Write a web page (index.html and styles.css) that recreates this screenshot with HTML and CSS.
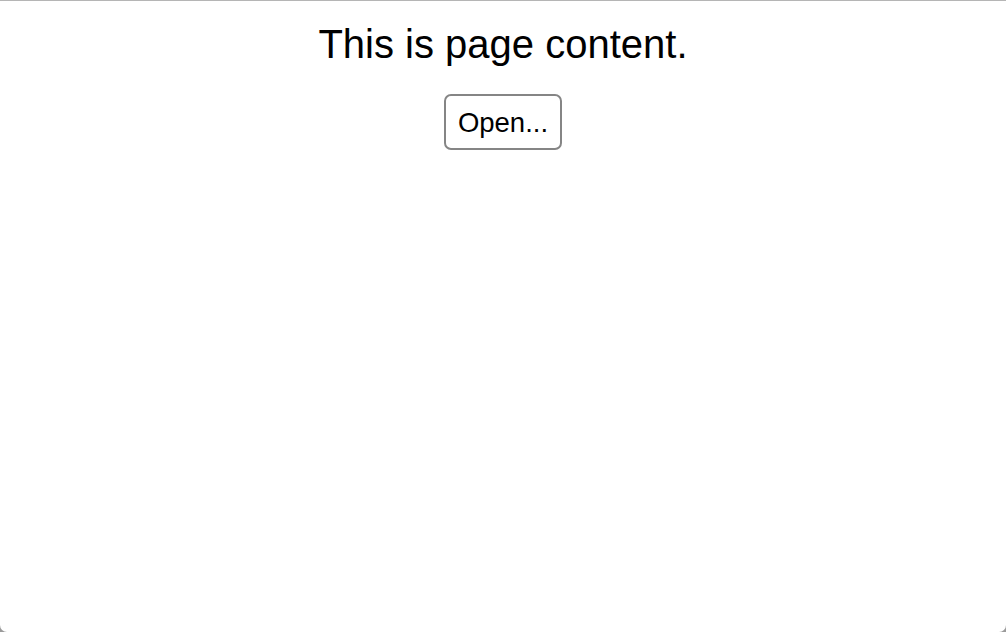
FILE: index.html
```html
<!DOCTYPE html>
<html>
<head>
<meta charset="utf-8">
<link rel="stylesheet" href="styles.css">
</head>
<body>
<div class="window">
  <main class="page">
    <p class="content">This is page content.</p>
    <button class="open-btn">Open...</button>
  </main>
</div>
</body>
</html>
```
FILE: styles.css
```css
html, body {
  margin: 0;
  padding: 0;
  height: 100%;
  background: #9a9a9a;
}
.window {
  height: 100%;
  box-sizing: border-box;
  background: #fff;
  border-top: 1px solid #b5b5b5;
  border-radius: 0 0 7px 7px;
  font-family: "Liberation Sans", Arial, sans-serif;
}
.page {
  display: flex;
  flex-direction: column;
  align-items: center;
}
.content {
  margin: 20px 0 0;
  font-size: 40px;
  line-height: 46px;
  color: #000;
}
.open-btn {
  margin-top: 27px;
  width: 118px;
  height: 56px;
  font-family: "Liberation Sans", Arial, sans-serif;
  font-size: 27.5px;
  color: #000;
  background: #fff;
  border: 2px solid #858585;
  border-radius: 7px;
  padding: 2px 0 0;
}
```
